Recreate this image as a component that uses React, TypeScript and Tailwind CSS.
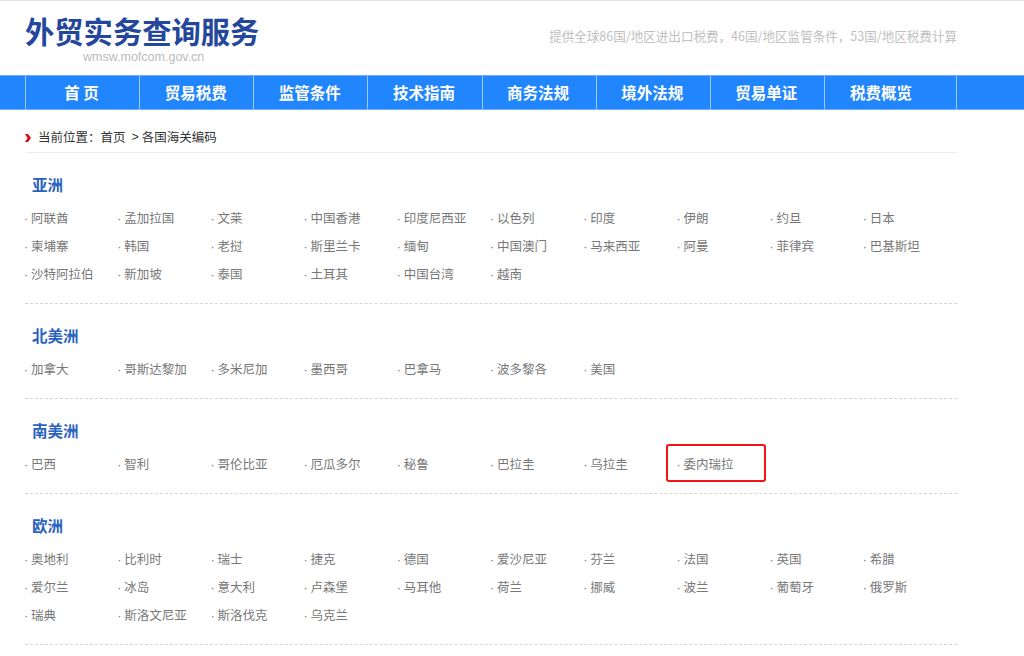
const font = "font-['Microsoft_YaHei','Noto_Sans_CJK_SC','Liberation_Sans',sans-serif]";

const nav = ["首 页", "贸易税费", "监管条件", "技术指南", "商务法规", "境外法规", "贸易单证", "税费概览"];

const sections: { title: string; items: string[] }[] = [
  {
    title: "亚洲",
    items: ["阿联酋", "孟加拉国", "文莱", "中国香港", "印度尼西亚", "以色列", "印度", "伊朗", "约旦", "日本", "柬埔寨", "韩国", "老挝", "斯里兰卡", "缅甸", "中国澳门", "马来西亚", "阿曼", "菲律宾", "巴基斯坦", "沙特阿拉伯", "新加坡", "泰国", "土耳其", "中国台湾", "越南"],
  },
  { title: "北美洲", items: ["加拿大", "哥斯达黎加", "多米尼加", "墨西哥", "巴拿马", "波多黎各", "美国"] },
  { title: "南美洲", items: ["巴西", "智利", "哥伦比亚", "厄瓜多尔", "秘鲁", "巴拉圭", "乌拉圭", "委内瑞拉"] },
  {
    title: "欧洲",
    items: ["奥地利", "比利时", "瑞士", "捷克", "德国", "爱沙尼亚", "芬兰", "法国", "英国", "希腊", "爱尔兰", "冰岛", "意大利", "卢森堡", "马耳他", "荷兰", "挪威", "波兰", "葡萄牙", "俄罗斯", "瑞典", "斯洛文尼亚", "斯洛伐克", "乌克兰"],
  },
];

export default function App() {
  return (
    <div className={`${font} w-[1024px] h-[656px] overflow-hidden bg-white border-t border-[#e3e3e3]`}>
      <header className="w-[932px] ml-[25px] h-[74px] flex justify-between">
        <div>
          <div className="text-[29.3px] leading-[34px] font-bold text-[#24479c] mt-[12px] whitespace-nowrap">外贸实务查询服务</div>
          <div className="font-['Liberation_Sans',sans-serif] text-[12.5px] leading-[16px] text-[#bbbbbb] ml-[58px] mt-[2px]">wmsw.mofcom.gov.cn</div>
        </div>
        <div className="text-[12.56px] leading-[18px] text-[#c0c0c0] mt-[26px] whitespace-nowrap">提供全球86国/地区进出口税费，46国/地区监管条件，53国/地区税费计算</div>
      </header>

      <nav className="h-[35px] bg-[#2186fd] border-y border-[#6fb0fd]">
        <div className="w-[932px] h-full ml-[25px] flex border-x border-[#9cc8fb]">
          {nav.map((n, i) => (
            <div
              key={n}
              className={`w-[114.13px] shrink-0 h-full flex items-center justify-center pr-[2px] text-white text-[15.5px] leading-[33px] font-bold whitespace-pre ${i < 7 ? "border-r border-[#9cc8fb]" : ""}`}
            >
              {n}
            </div>
          ))}
        </div>
      </nav>

      <main className="w-[932px] ml-[25px]">
        <div className="h-[43px] border-b border-[#ececec] flex items-end pb-[5px] text-[12.5px] leading-[20px] text-[#333]">
          <svg width="6" height="8" viewBox="0 0 6 8" className="mb-[5px] mr-[7px]">
            <polygon points="0,0 3,0 6,4 3,8 0,8 2.5,4" fill="#d01018" />
          </svg>
          <span>当前位置：首页</span>
          <span className="ml-[6px] mr-[3px] font-['Liberation_Sans',sans-serif]">&gt;</span>
          <span>各国海关编码</span>
        </div>

        {sections.map((s) => (
          <section key={s.title} className="border-b border-dashed border-[#d5d5d5] pt-[17px] pb-[15px]">
            <h2 className="h-[28px] leading-[28px] text-[15.5px] font-bold text-[#2a62c0] pl-[7px] mb-[6px]">{s.title}</h2>
            <ul className="grid grid-cols-10">
              {s.items.map((it) => (
                <li key={it} className="relative h-[28px] leading-[28px] text-[12.5px] text-[#777] whitespace-nowrap">
                  <span className="inline-block w-[7px] -ml-px font-['Liberation_Sans',sans-serif] text-[#777]">·</span>
                  {it}
                  {it === "委内瑞拉" && (
                    <span className="absolute left-[-11.5px] top-[-6px] w-[100px] h-[38px] border-2 border-[#f01414] rounded-[3px]" />
                  )}
                </li>
              ))}
            </ul>
          </section>
        ))}
      </main>
    </div>
  );
}
